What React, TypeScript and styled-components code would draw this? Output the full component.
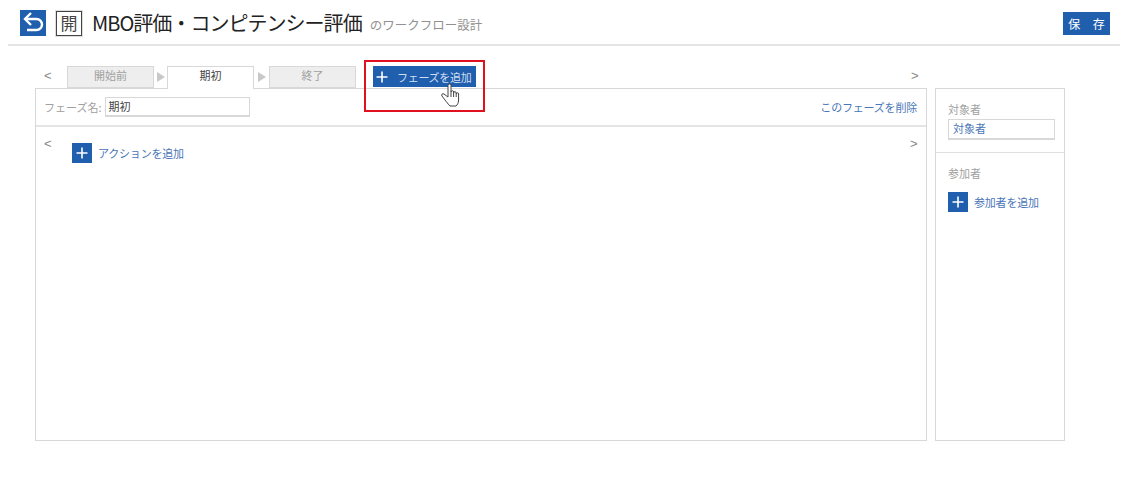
import React from "react";
import styled, { createGlobalStyle } from "styled-components";

const Global = createGlobalStyle`
  html, body { margin: 0; padding: 0; background: #fff; }
  body { font-family: "Noto Sans CJK JP", "Liberation Sans", sans-serif; color: #333; width: 1128px; height: 481px; overflow: hidden; }
`;
const Page = styled.div`position: relative; width: 1128px; height: 481px; overflow: hidden;`;
const Header = styled.header`
  margin: 0 8px; border-bottom: 2px solid #e4e4e4; display: flex; align-items: flex-start;
  padding: 10px 10px 0 12px; box-sizing: content-box; height: 34px;
`;
const BackButton = styled.div`
  width: 26px; height: 26px; background: #1f5fae; display: flex; align-items: center; justify-content: center; flex: none;
`;
const OpenBadge = styled.div`
  width: 26px; height: 25px; box-sizing: border-box; margin-left: 10px; border: 1px solid #444; outline: 1px solid #ddd; outline-offset: 0;
  font-size: 17px; line-height: 22px; text-align: center; color: #444; flex: none; margin-top: 1px;
`;
const Title = styled.h1`
  margin: 0 0 0 10px; font-size: 20px; font-weight: 400; line-height: 25px; color: #222; letter-spacing: -0.97px; white-space: nowrap;
  font-family: "Noto Sans CJK JP", sans-serif;
`;
const Sub = styled.span`margin-left: 8px; margin-top: 7px; font-size: 12.5px; line-height: 16px; color: #919191; white-space: nowrap;`;
const Save = styled.button`
  margin-left: auto; margin-top: 2px; width: 47px; height: 23px; padding: 0; border: 0; background: #1f5fae; color: #fff;
  font: 12px "Noto Sans CJK JP", sans-serif; word-spacing: 10px; letter-spacing: 0;
`;
const Workspace = styled.div`display: flex; gap: 8px; padding: 20px 0 0 35px; align-items: flex-end;`;
const MainColumn = styled.div`width: 892px; flex: none;`;
const TabRow = styled.div`height: 22px; display: flex; align-items: flex-start; position: relative; padding-left: 9px;`;
const Chevron = styled.span`
  font: 13px "Liberation Sans", sans-serif; color: #888; line-height: 20px; width: 23px; flex: none;
`;
const Tab = styled.div<{ $active?: boolean }>`
  width: 87px; height: ${(p) => (p.$active ? 23 : 22)}px; box-sizing: border-box; border: 1px solid #d8d8d8;
  border-bottom: ${(p) => (p.$active ? "0" : "1px solid #d8d8d8")};
  background: ${(p) => (p.$active ? "#fff" : "#eeeeee")}; color: ${(p) => (p.$active ? "#444" : "#a0a0a0")};
  font-size: 11px; line-height: 17px; text-align: center; flex: none; position: relative; z-index: 1;
  margin: ${(p) => (p.$active ? "0 1px 0 -1px" : "0")};
`;
const TabArrow = styled.div`
  width: 14px; flex: none; display: flex; justify-content: center; padding-top: 6px; box-sizing: border-box;
`;
const Triangle = styled.span`
  width: 0; height: 0; border-left: 8px solid #c8c8c8; border-top: 5px solid transparent; border-bottom: 5px solid transparent;
`;
const AddPhase = styled.div`
  margin-left: 17px; width: 103px; height: 21px; background: #1f5fae; color: #d8e4f2; display: flex; align-items: center;
  padding-left: 3px; box-sizing: border-box; white-space: nowrap;
`;
const PlusGlyph = styled.svg`flex: none; display: block;`;
const AddLabel = styled.span`margin-left: 9px; font-size: 11px; letter-spacing: -0.3px; color: #cfdef0;`;
const ChevronRight = styled(Chevron)`margin-left: auto; width: 16px;`;
const Panel = styled.section`
  border: 1px solid #d8d8d8; height: 353px; box-sizing: border-box;
`;
const PhaseBar = styled.div`
  height: 36px; border-bottom: 2px solid #e4e4e4; display: flex; align-items: center; padding: 0 9px 0 8px; box-sizing: content-box;
`;
const PhaseLabel = styled.span`font-size: 11px; color: #a0a0a0; white-space: nowrap;`;
const PhaseInput = styled.div`
  margin-left: 3px; width: 145px; height: 20px; box-sizing: border-box; border: 1px solid #d8d8d8; border-bottom-width: 2px; font-size: 11px; line-height: 17px;
  padding-left: 3px; color: #444;
`;
const TextLink = styled.span`color: #4a76b8; font-size: 11px; letter-spacing: -0.2px; white-space: nowrap;`;
const DeleteLink = styled(TextLink)`margin-left: auto;`;
const ActionArea = styled.div`display: flex; padding: 8px 8px 0 8px;`;
const ActionChev = styled(Chevron)`width: 28px; line-height: 18px;`;
const ActionChevRight = styled(Chevron)`margin-left: auto; width: 8px; line-height: 18px;`;
const AddRow = styled.div`display: flex; align-items: center; gap: 6px; margin-top: 8px;`;
const AddSquare = styled.div`
  width: 20px; height: 20px; background: #1f5fae; display: flex; align-items: center; justify-content: center; flex: none;
`;
const SidePanel = styled.aside`
  width: 130px; height: 353px; box-sizing: border-box; border: 1px solid #d8d8d8; flex: none;
`;
const SideSection = styled.div<{ $first?: boolean }>`
  padding: ${(p) => (p.$first ? "12px 9px 11px 12px" : "12px 9px 0 12px")};
  border-bottom: ${(p) => (p.$first ? "1px solid #e0e0e0" : "0")};
  ${(p) => (p.$first ? "height: 40px;" : "")}
`;
const SideTitle = styled.div`font-size: 11px; line-height: 16px; color: #a0a0a0;`;
const SideField = styled.div`
  height: 21px; box-sizing: border-box; border: 1px solid #d8d8d8; border-bottom-width: 2px; margin-top: 2px; padding-left: 4px; font-size: 11px; line-height: 17px; color: #4a76b8;
`;
const SideAdd = styled(AddRow)`margin-top: 11px;`;
const Highlight = styled.div`
  position: absolute; left: 364px; top: 60px; width: 121px; height: 52px; box-sizing: border-box; border: 2px solid #e0101f; z-index: 3; pointer-events: none;
`;
const Cursor = styled.svg`position: absolute; left: 441px; top: 83px; z-index: 4;`;

const Plus = ({ size = 12 }: { size?: number }) => (
  <PlusGlyph width={size} height={size} viewBox="0 0 12 12"><path d="M6 .5v11M.5 6h11" stroke="#fff" strokeWidth="1.6" fill="none" /></PlusGlyph>
);

export default function App() {
  return (
    <Page>
      <Global />
      <Header>
        <BackButton>
          <svg width="26" height="26" viewBox="0 0 26 26" fill="none" stroke="#fff" strokeWidth="2.4">
            <path d="M5 9h11.500a5.500 5.500 0 0 1 0 11H7" />
            <path d="M11 3 5 9l6 6" />
          </svg>
        </BackButton>
        <OpenBadge>開</OpenBadge>
        <Title>MBO評価・コンピテンシー評価</Title>
        <Sub>のワークフロー設計</Sub>
        <Save>保 存</Save>
      </Header>
      <Workspace>
        <MainColumn>
          <TabRow>
            <Chevron>&lt;</Chevron>
            <Tab>開始前</Tab>
            <TabArrow><Triangle /></TabArrow>
            <Tab $active>期初</Tab>
            <TabArrow><Triangle /></TabArrow>
            <Tab>終了</Tab>
            <AddPhase><Plus /><AddLabel>フェーズを追加</AddLabel></AddPhase>
            <ChevronRight>&gt;</ChevronRight>
          </TabRow>
          <Panel>
            <PhaseBar>
              <PhaseLabel>フェーズ名:</PhaseLabel>
              <PhaseInput>期初</PhaseInput>
              <DeleteLink>このフェーズを削除</DeleteLink>
            </PhaseBar>
            <ActionArea>
              <ActionChev>&lt;</ActionChev>
              <AddRow>
                <AddSquare><Plus /></AddSquare>
                <TextLink>アクションを追加</TextLink>
              </AddRow>
              <ActionChevRight>&gt;</ActionChevRight>
            </ActionArea>
          </Panel>
        </MainColumn>
        <SidePanel>
          <SideSection $first>
            <SideTitle>対象者</SideTitle>
            <SideField>対象者</SideField>
          </SideSection>
          <SideSection>
            <SideTitle>参加者</SideTitle>
            <SideAdd>
              <AddSquare><Plus /></AddSquare>
              <TextLink>参加者を追加</TextLink>
            </SideAdd>
          </SideSection>
        </SidePanel>
      </Workspace>
      <Highlight />
      <Cursor width="20" height="24" viewBox="0 0 20 24" fill="#fff" stroke="#444" strokeWidth="1" strokeLinejoin="round">
        <path d="M7 13V2.500a1.500 1.500 0 0 1 3 0V9a1.300 1.300 0 0 1 2.600 0v1a1.300 1.300 0 0 1 2.600 0v1a1.200 1.200 0 0 1 2.400 0v6c0 3-1.500 5-2.500 6H9C7 21 4 17 1 13c-1-1.500.5-3 2-2l4 3z" />
        <path d="M10 9v5M12.600 10v4M15.200 11v3" fill="none" />
      </Cursor>
    </Page>
  );
}
